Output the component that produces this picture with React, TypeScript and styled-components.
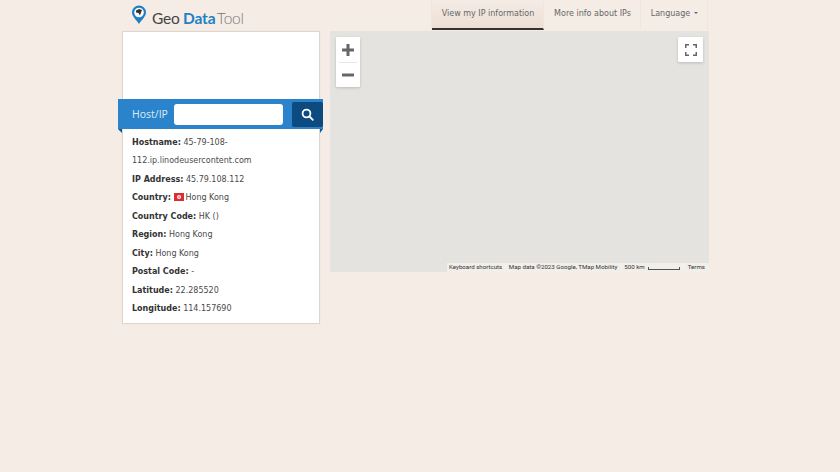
import React from "react";
import styled, { createGlobalStyle } from "styled-components";

const Global = createGlobalStyle`
  html, body { margin: 0; padding: 0; background: #f5ece6; height: 100%; overflow: hidden; }
  body { font-family: "DejaVu Sans", Verdana, sans-serif; color: #333; }
`;
const Page = styled.div`
  width: 587px;
  margin-left: 122px;
  display: flex;
  flex-direction: column;
`;
const Header = styled.header`
  height: 30px;
  display: flex;
  justify-content: space-between;
`;
const Logo = styled.div`
  display: flex;
  align-items: flex-start;
  padding: 6px 0 0 9px;
  font-family: Lato, sans-serif;
  font-size: 15.5px;
  line-height: 24px;
  letter-spacing: -0.2px;
  color: #444;
  svg { margin-right: 5px; margin-top: -1px; }
`;
const LogoWord = styled.span<{ $c: string; $w: number; $mr: number }>`
  color: ${(p) => p.$c};
  font-weight: ${(p) => p.$w};
  margin-right: ${(p) => p.$mr}px;
`;
const Nav = styled.nav`
  display: flex;
  margin-right: 1px;
  border-left: 1px solid #efe6df;
`;
const NavItem = styled.a<{ $active?: boolean; $w: number }>`
  box-sizing: border-box;
  width: ${(p) => p.$w}px;
  height: 30px;
  display: flex;
  justify-content: center;
  align-items: center;
  padding: 0 0 2px 1px;
  font-size: 8px;
  color: #666;
  border-right: 1px solid #efe6df;
  border-bottom: 2px solid ${(p) => (p.$active ? "#3a302c" : "transparent")};
  background: ${(p) => (p.$active ? "linear-gradient(#f5ece6, #ecdfd5)" : "transparent")};
`;
const Caret = styled.span`
  display: inline-block;
  margin-left: 4px;
  border-top: 2px solid #666;
  border-left: 2.5px solid transparent;
  border-right: 2.5px solid transparent;
`;
const Main = styled.main`
  display: flex;
  align-items: flex-start;
  gap: 10px;
  margin-top: 1px;
`;
const Card = styled.section`
  box-sizing: border-box;
  width: 198px;
  height: 293px;
  background: #fff;
  border: 1px solid #ddd6d0;
  box-shadow: 0 0 1px rgba(0, 0, 0, 0.08);
  padding-top: 67px;
`;
const Band = styled.div`
  position: relative;
  width: 205px;
  height: 30px;
  margin-left: -5px;
  box-sizing: border-box;
  background: #2b83cb;
  display: flex;
  align-items: center;
  padding: 0 0 0 14px;
  &::before, &::after {
    content: "";
    position: absolute;
    top: 100%;
    border-top: 4px solid #0f5a96;
  }
  &::before { left: 0; border-left: 4px solid transparent; }
  &::after { right: 0; border-right: 3px solid transparent; }
`;
const BandLabel = styled.label`
  width: 42px;
  flex: none;
  color: #dcecf8;
  font-family: "Open Sans", sans-serif;
  font-size: 10.5px;
`;
const HostInput = styled.input`
  box-sizing: border-box;
  width: 109px;
  flex: none;
  height: 21px;
  border: 0;
  border-radius: 3px;
  background: #fff;
  margin-right: 9px;
  padding: 0;
`;
const SearchBtn = styled.button`
  width: 31px;
  height: 25px;
  flex: none;
  border: 0;
  border-radius: 2px;
  padding: 0;
  background: #0c4a80;
  display: flex;
  align-items: center;
  justify-content: center;
`;
const Info = styled.div`
  padding: 5px 9px 0 9px;
  font-size: 8px;
  line-height: 18.45px;
  color: #4a4a4a;
`;
const Row = styled.div``;
const Key = styled.b`
  font-weight: 700;
  color: #333;
`;
const Flag = styled.svg`
  vertical-align: -1px;
  margin-right: 2px;
`;
const MapPane = styled.div`
  position: relative;
  width: 379px;
  height: 241px;
  background: #e5e3df;
`;
const Control = styled.div`
  position: absolute;
  background: #fff;
  box-shadow: 0 1px 3px rgba(0, 0, 0, 0.18);
  border-radius: 1px;
  display: flex;
  flex-direction: column;
  align-items: center;
  justify-content: center;
`;
const ZoomCtl = styled(Control)`
  left: 6px;
  top: 6px;
  width: 24px;
  height: 50px;
`;
const ZoomBtn = styled.div`
  height: 24px;
  width: 24px;
  display: flex;
  align-items: center;
  justify-content: center;
`;
const Sep = styled.div`
  width: 18px;
  height: 1px;
  background: #e6e6e6;
`;
const FullBtn = styled(Control)`
  right: 6px;
  top: 6px;
  width: 25px;
  height: 25px;
`;
const Attribution = styled.div`
  position: absolute;
  right: 0;
  bottom: 0;
  height: 9px;
  width: 262px;
  display: flex;
  align-items: center;
  background: rgba(245, 240, 236, 0.85);
  font-family: Roboto, sans-serif;
  font-size: 6.15px;
  line-height: 9px;
  color: #333;
  white-space: nowrap;
`;
const Attr = styled.span<{ $ml: number }>`
  margin-left: ${(p) => p.$ml}px;
`;
const Scale = styled.span`
  display: inline-block;
  box-sizing: border-box;
  width: 32px;
  height: 3px;
  margin: 1px 0 0 3px;
  border: 1px solid #555;
  border-top: 0;
`;

export default function App() {
  return (
    <Page>
      <Global />
      <Header>
        <Logo>
          <svg width="16" height="20" viewBox="0 0 16 20">
            <path d="M8 .5a7 7 0 0 1 7 7c0 3.800-4 7-7 11.500C5 14.500 1 11.300 1 7.500a7 7 0 0 1 7-7z" fill="#1f7fc4" />
            <circle cx="8" cy="7.500" r="4.800" fill="#fff" />
            <path d="M5 5.500 8 4l3 1-1 2.500-1 3-1.500-2.500L5 7.500z" fill="#333" />
          </svg>
          <LogoWord $c="#444" $w={400} $mr={3.5}>Geo</LogoWord>
          <LogoWord $c="#1f7fc4" $w={700} $mr={1.5}>Data</LogoWord>
          <LogoWord $c="#777" $w={300} $mr={0}>Tool</LogoWord>
        </Logo>
        <Nav>
          <NavItem $active $w={112}>View my IP information</NavItem>
          <NavItem $w={97}>More info about IPs</NavItem>
          <NavItem $w={67}>Language<Caret /></NavItem>
        </Nav>
      </Header>
      <Main>
        <Card>
          <Band>
            <BandLabel>Host/IP</BandLabel>
            <HostInput />
            <SearchBtn aria-label="Search">
              <svg width="13" height="13" viewBox="0 0 13 13" fill="none" stroke="#fff" strokeWidth="1.800" strokeLinecap="round">
                <circle cx="5.500" cy="5.500" r="3.900" />
                <path d="M8.500 8.500 11.800 11.800" />
              </svg>
            </SearchBtn>
          </Band>
          <Info>
            <Row><Key>Hostname:</Key> 45-79-108-</Row>
            <Row>112.ip.linodeusercontent.com</Row>
            <Row><Key>IP Address:</Key> 45.79.108.112</Row>
            <Row>
              <Key>Country:</Key>{" "}
              <Flag width="10" height="8" viewBox="0 0 10 8">
                <rect width="10" height="8" fill="#de2c34" />
                <circle cx="5" cy="4" r="2" fill="#fff" />
                <circle cx="5" cy="4" r="0.800" fill="#de2c34" />
              </Flag>
              Hong Kong
            </Row>
            <Row><Key>Country Code:</Key> HK ()</Row>
            <Row><Key>Region:</Key> Hong Kong</Row>
            <Row><Key>City:</Key> Hong Kong</Row>
            <Row><Key>Postal Code:</Key> -</Row>
            <Row><Key>Latitude:</Key> 22.285520</Row>
            <Row><Key>Longitude:</Key> 114.157690</Row>
          </Info>
        </Card>
        <MapPane>
          <ZoomCtl>
            <ZoomBtn>
              <svg width="14" height="14" viewBox="0 0 14 14"><path d="M5.500 1h3v4.500H13v3H8.500V13h-3V8.500H1v-3h4.500z" fill="#666" /></svg>
            </ZoomBtn>
            <Sep />
            <ZoomBtn>
              <svg width="14" height="14" viewBox="0 0 14 14"><path d="M1 5.500h12v3H1z" fill="#666" /></svg>
            </ZoomBtn>
          </ZoomCtl>
          <FullBtn>
            <svg width="12" height="12" viewBox="0 0 12 12" fill="none" stroke="#666" strokeWidth="1.500">
              <path d="M.75 4V.75H4M8 .75h3.250V4M11.250 8v3.250H8M4 11.250H.75V8" />
            </svg>
          </FullBtn>
          <Attribution>
            <Attr $ml={2}>Keyboard shortcuts</Attr>
            <Attr $ml={6.5}>Map data ©2023 Google, TMap Mobility</Attr>
            <Attr $ml={7}>500 km</Attr>
            <Scale />
            <Attr $ml={8}>Terms</Attr>
          </Attribution>
        </MapPane>
      </Main>
    </Page>
  );
}
